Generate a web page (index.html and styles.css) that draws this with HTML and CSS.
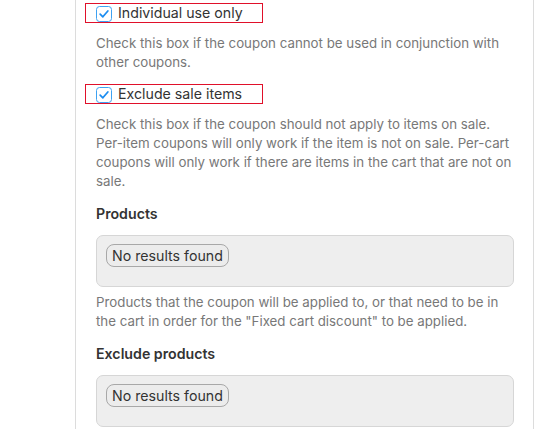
FILE: index.html
```html
<!DOCTYPE html>
<html>
<head>
<meta charset="utf-8">
<link rel="stylesheet" href="styles.css">
</head>
<body>
<div class="page">
  <div class="panel">
    <label class="check-row">
      <span class="box"><svg viewBox="0 0 16 16" width="14" height="14"><path d="M3.6 8.2 L6.7 11.2 L12.4 4.6" fill="none" stroke="#1a8cf0" stroke-width="2" stroke-linecap="round" stroke-linejoin="round"/></svg></span>
      <span class="label">Individual use only</span>
    </label>
    <p class="desc d1">Check this box if the coupon cannot be used in conjunction with other coupons.</p>
    <label class="check-row r2">
      <span class="box"><svg viewBox="0 0 16 16" width="14" height="14"><path d="M3.6 8.2 L6.7 11.2 L12.4 4.6" fill="none" stroke="#1a8cf0" stroke-width="2" stroke-linecap="round" stroke-linejoin="round"/></svg></span>
      <span class="label">Exclude sale items</span>
    </label>
    <p class="desc d2">Check this box if the coupon should not apply to items on sale. Per-item coupons will only work if the item is not on sale. Per-cart coupons will only work if there are items in the cart that are not on sale.</p>
    <h3 class="heading h1">Products</h3>
    <div class="select"><span class="chip">No results found</span></div>
    <p class="desc d3">Products that the coupon will be applied to, or that need to be in the cart in order for the "Fixed cart discount" to be applied.</p>
    <h3 class="heading h2">Exclude products</h3>
    <div class="select"><span class="chip">No results found</span></div>
  </div>
</div>
</body>
</html>
```
FILE: styles.css
```css
html, body {
  margin: 0;
  padding: 0;
  background: #ffffff;
  font-family: "Inter", "Liberation Sans", sans-serif;
  overflow: hidden;
}
.page {
  width: 550px;
  height: 429px;
  overflow: hidden;
}
.panel {
  margin-left: 75px;
  width: 417px;
  height: 429px;
  border-left: 1px solid #dcdcdc;
  border-right: 1px solid #dcdcdc;
  padding: 3px 20px 0 20px;
  box-sizing: content-box;
}
.check-row {
  display: flex;
  align-items: center;
  width: 166px;
  height: 18px;
  margin-left: -11px;
  padding-left: 10px;
  border: 1px solid #e0102a;
  gap: 6px;
}
.check-row.r2 {
  margin-top: 12px;
}
.box {
  width: 14px;
  height: 14px;
  border: 1px solid #3ea2f2;
  border-radius: 3.5px;
  display: flex;
  align-items: center;
  justify-content: center;
  background: #fff;
  flex: none;
  margin-top: 1px;
}
.box svg {
  display: block;
}
.label {
  font-size: 14.2px;
  color: #333;
  line-height: 18px;
}
.desc {
  margin: 11px 0 0 0;
  font-size: 13.3px;
  line-height: 19px;
  color: #787878;
}
.desc.d3 {
  margin-top: 6px;
}
.heading {
  margin: 13px 0 0 0;
  font-size: 14.2px;
  line-height: 20px;
  font-weight: 600;
  color: #333;
}
.heading.h2 {
  margin-top: 13px;
}
.select {
  margin-top: 11px;
  width: 418px;
  height: 52px;
  border: 1px solid #d6d6d6;
  border-radius: 7px;
  background: #eeeeee;
  padding: 8px 0 0 9px;
  box-sizing: border-box;
}
.chip {
  display: inline-block;
  border: 1px solid #a8a8a8;
  border-radius: 8px;
  padding: 1px 5px;
  font-size: 14.2px;
  line-height: 19px;
  color: #333;
  background: #ececec;
}
```
